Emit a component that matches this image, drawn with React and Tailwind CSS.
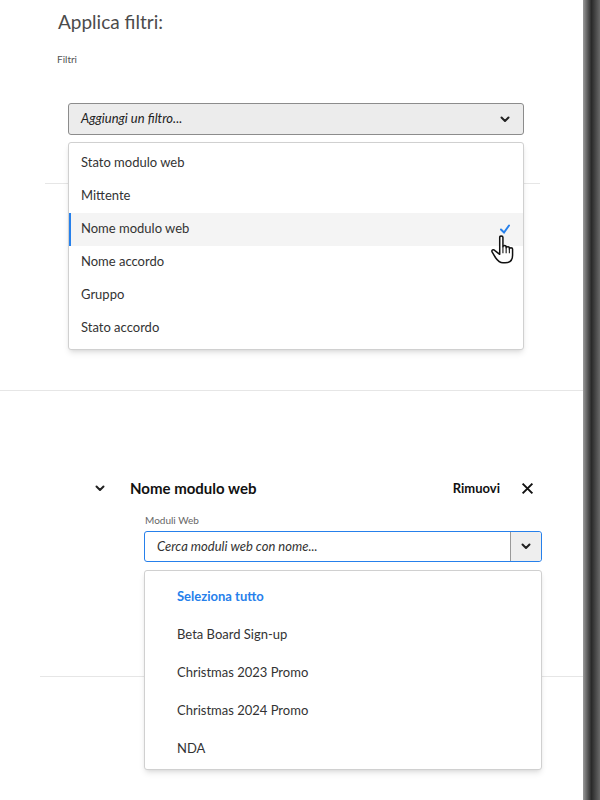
import React from "react";

const Chev = ({ c = "w-3 h-3" }) => (
  <svg viewBox="0 0 12 12" className={c}><path d="M2.5 4.5 L6 8 L9.5 4.5" fill="none" stroke="#222" strokeWidth="2" strokeLinecap="round" strokeLinejoin="round" /></svg>
);

export default function App() {
  const items1 = ["Stato modulo web", "Mittente", "Nome modulo web", "Nome accordo", "Gruppo", "Stato accordo"];
  const items2 = ["Beta Board Sign-up", "Christmas 2023 Promo", "Christmas 2024 Promo", "NDA"];
  return (
    <div className="w-[600px] h-[800px] flex bg-white overflow-hidden" style={{ fontFamily: "Lato, 'Open Sans', sans-serif" }}>
      <div className="w-[583px] h-full flex flex-col relative">
        <div className="pl-[58px] pt-[8px] text-[19px] text-[#4b4b4b]">Applica filtri:</div>
        <div className="pl-[57px] mt-[15px] text-[10px] text-[#555]">Filtri</div>
        <div className="relative mt-[36px] h-[280px]">
          <div className="ml-[68px] w-[456px] h-[32px] bg-[#ececec] border border-[#8c8c8c] rounded-[3px] flex items-center justify-between px-3 text-[13px] italic text-[#222]">
            <span>Aggiungi un filtro...</span><Chev />
          </div>
          <div className="absolute left-[45px] w-[495px] top-[80px] border-t border-[#e6e6e6]" />
          <div className="absolute left-[68px] top-[39px] w-[456px] bg-white border border-[#d0d0d0] rounded-[3px] shadow-md py-[4px] flex flex-col">
            {items1.map((t, i) => (
              <div key={t} className={`h-[33px] flex items-center justify-between px-3 text-[13px] text-[#333] ${i === 2 ? "bg-[#f4f4f4] border-l-2 border-[#2680eb] pl-[10px]" : ""}`}>
                <span>{t}</span>
                {i === 2 && (
                  <span className="relative">
                    <svg viewBox="0 0 12 12" className="w-3 h-3"><path d="M2 6.5 L5 9.5 L10 2.5" fill="none" stroke="#2680eb" strokeWidth="2" strokeLinecap="round" /></svg>
                    <svg viewBox="0 0 24 28" className="absolute left-[-8px] top-[12px] w-[26px] h-[30px]">
                      <path d="M8 2 C8 0.5 11 0.5 11 2 V11 C11 9.5 14 9.5 14 11 V12 C14 10.5 17 10.5 17 12 V13 C17 11.5 20 11.5 20 13 V19 C20 24 17 26 13 26 H11 C8 26 6 24 4 21 L1 16 C0 14 2 13 3.5 14.5 L8 18 Z" fill="white" stroke="#111" strokeWidth="1.4" strokeLinejoin="round" />
                      <path d="M11 11 V17 M14 12 V17 M17 13 V17" stroke="#111" strokeWidth="1" />
                    </svg>
                  </span>
                )}
              </div>
            ))}
          </div>
        </div>
        <div className="mt-[36px] border-t border-[#e6e6e6]" />
        <div className="mt-[86px] flex items-center h-[26px]">
          <div className="pl-[94px] w-[130px]"><Chev /></div>
          <div className="text-[15px] font-bold text-[#111] flex-1">Nome modulo web</div>
          <div className="text-[13px] font-bold text-[#111]">Rimuovi</div>
          <svg viewBox="0 0 12 12" className="w-[13px] h-[13px] ml-[21px] mr-[49px]"><path d="M1.5 1.5 L10.5 10.5 M10.5 1.5 L1.5 10.5" stroke="#111" strokeWidth="1.8" /></svg>
        </div>
        <div className="pl-[145px] mt-[13px] text-[10px] text-[#666]">Moduli Web</div>
        <div className="relative mt-[3px] h-[300px]">
          <div className="ml-[144px] w-[398px] h-[31px] border border-[#2680eb] rounded-[3px] flex text-[13px] italic text-[#333]">
            <div className="flex-1 flex items-center pl-3">Cerca moduli web con nome...</div>
            <div className="w-[31px] bg-[#eeeeee] border-l border-[#999] flex items-center justify-center rounded-r-[3px]"><Chev /></div>
          </div>
          <div className="absolute left-[40px] right-0 top-[145px] border-t border-[#e6e6e6]" />
          <div className="absolute left-[144px] top-[39px] w-[398px] h-[200px] bg-white border border-[#d0d0d0] rounded-[3px] shadow-md pt-[7px] flex flex-col">
            <div className="h-[38px] flex items-center pl-[32px] text-[13px] font-bold text-[#2680eb]">Seleziona tutto</div>
            {items2.map((t) => (
              <div key={t} className="h-[38px] flex items-center pl-[32px] text-[13px] text-[#333]">{t}</div>
            ))}
          </div>
        </div>
      </div>
      <div className="w-[17px] h-full bg-gradient-to-r from-[#9a9a9a] via-[#2a2a2a] to-[#6a6a6a]" />
    </div>
  );
}
